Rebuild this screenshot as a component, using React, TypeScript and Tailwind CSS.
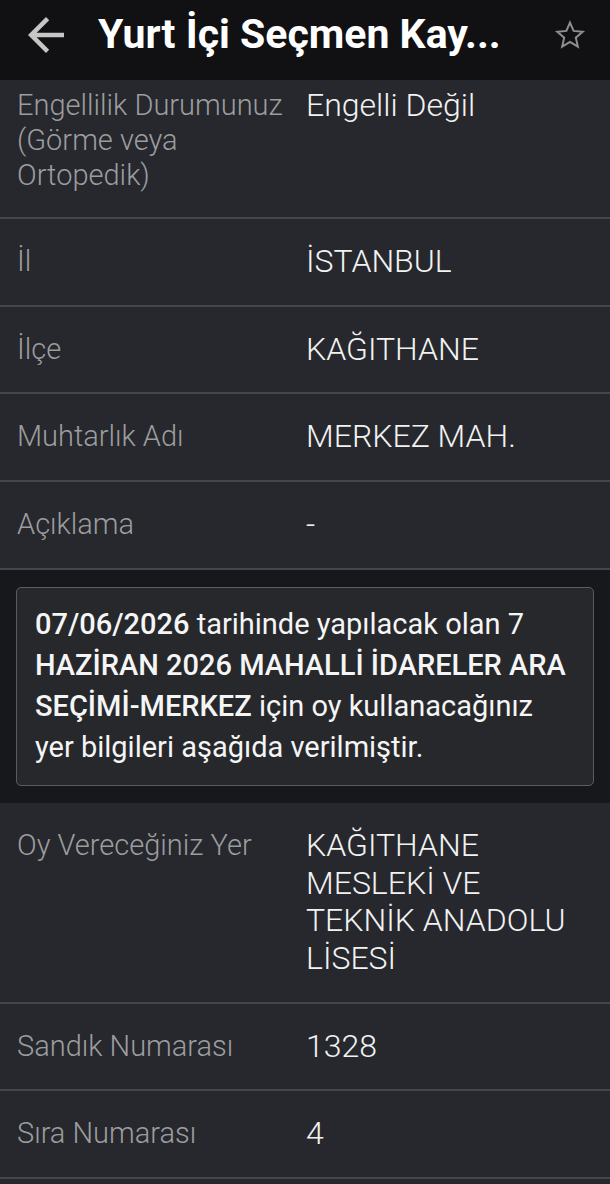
import React from "react";

type Row = { label: string; value: string };

const topRows: Row[] = [
  { label: "Engellilik Durumunuz (Görme veya Ortopedik)", value: "Engelli Değil" },
  { label: "İl", value: "İSTANBUL" },
  { label: "İlçe", value: "KAĞITHANE" },
  { label: "Muhtarlık Adı", value: "MERKEZ MAH." },
  { label: "Açıklama", value: "-" },
];

const bottomRows: Row[] = [
  { label: "Oy Vereceğiniz Yer", value: "KAĞITHANE MESLEKİ VE TEKNİK ANADOLU LİSESİ" },
  { label: "Sandık Numarası", value: "1328" },
  { label: "Sıra Numarası", value: "4" },
];

const InfoRow = ({ label, value }: Row) => (
  <div className="flex border-b-2 border-[#44464b] bg-[#26282d] px-[17px] pt-[24px] pb-[24px]">
    <div className="mt-[1px] w-[289px] shrink-0 pr-2 text-[29px] font-light leading-[35px] text-[#9c9d9f]">
      {label}
    </div>
    <div className="flex-1 pr-3 text-[32px] font-light leading-[37.7px] text-[#f2f2f2]">
      {value}
    </div>
  </div>
);

export default function App() {
  return (
    <div
      className="flex h-[1184px] w-[610px] flex-col overflow-hidden bg-[#26282d]"
      style={{ fontFamily: "Roboto, 'Noto Sans', sans-serif" }}
    >
      {/* toolbar */}
      <div className="z-10 h-[80px] shrink-0 bg-[#111113]">
        <div className="flex h-[70px] items-center">
          <svg width="54" height="54" viewBox="0 0 24 24" className="ml-[19px]">
            <path
              fill="#c6c6c6"
              d="M20 11H7.83l5.59-5.59L12 4l-8 8 8 8 1.41-1.41L7.83 13H20v-2z"
            />
          </svg>
          <h1 className="ml-[25px] flex-1 whitespace-nowrap text-[41px] font-bold text-white">
            Yurt İçi Seçmen Kay...
          </h1>
          <svg width="34" height="34" viewBox="0 0 24 24" className="mr-[23px] mb-[1px]">
            <path
              fill="none"
              stroke="#8f8f8f"
              strokeWidth="1.4"
              strokeLinejoin="miter"
              d="M12 3.2l2.55 5.9 6.4.6-4.85 4.2 1.45 6.3L12 16.9l-5.55 3.3 1.45-6.3-4.85-4.2 6.4-.6z"
            />
          </svg>
        </div>
      </div>

      {/* scrolled content */}
      <div className="flex-1 overflow-hidden">
        <div className="-mt-[17px]">
          {topRows.map((r, i) => (
            <InfoRow key={i} {...r} />
          ))}

          <div className="bg-[#17181c] px-4 pt-[17px] pb-[17px]">
            <div className="rounded-[5px] border border-[#5a5c61] bg-[#26282c] px-[18px] pt-[16px] pb-[17px] text-[29px] leading-[41px] text-[#f5f5f5]">
              <span className="font-medium">07/06/2026</span> tarihinde yapılacak olan 7{" "}
              <span className="font-medium">HAZİRAN 2026 MAHALLİ İDARELER ARA SEÇİMİ-MERKEZ</span>{" "}
              için oy kullanacağınız yer bilgileri aşağıda verilmiştir.
            </div>
          </div>

          {bottomRows.map((r, i) => (
            <InfoRow key={i} {...r} />
          ))}
        </div>
      </div>
    </div>
  );
}
